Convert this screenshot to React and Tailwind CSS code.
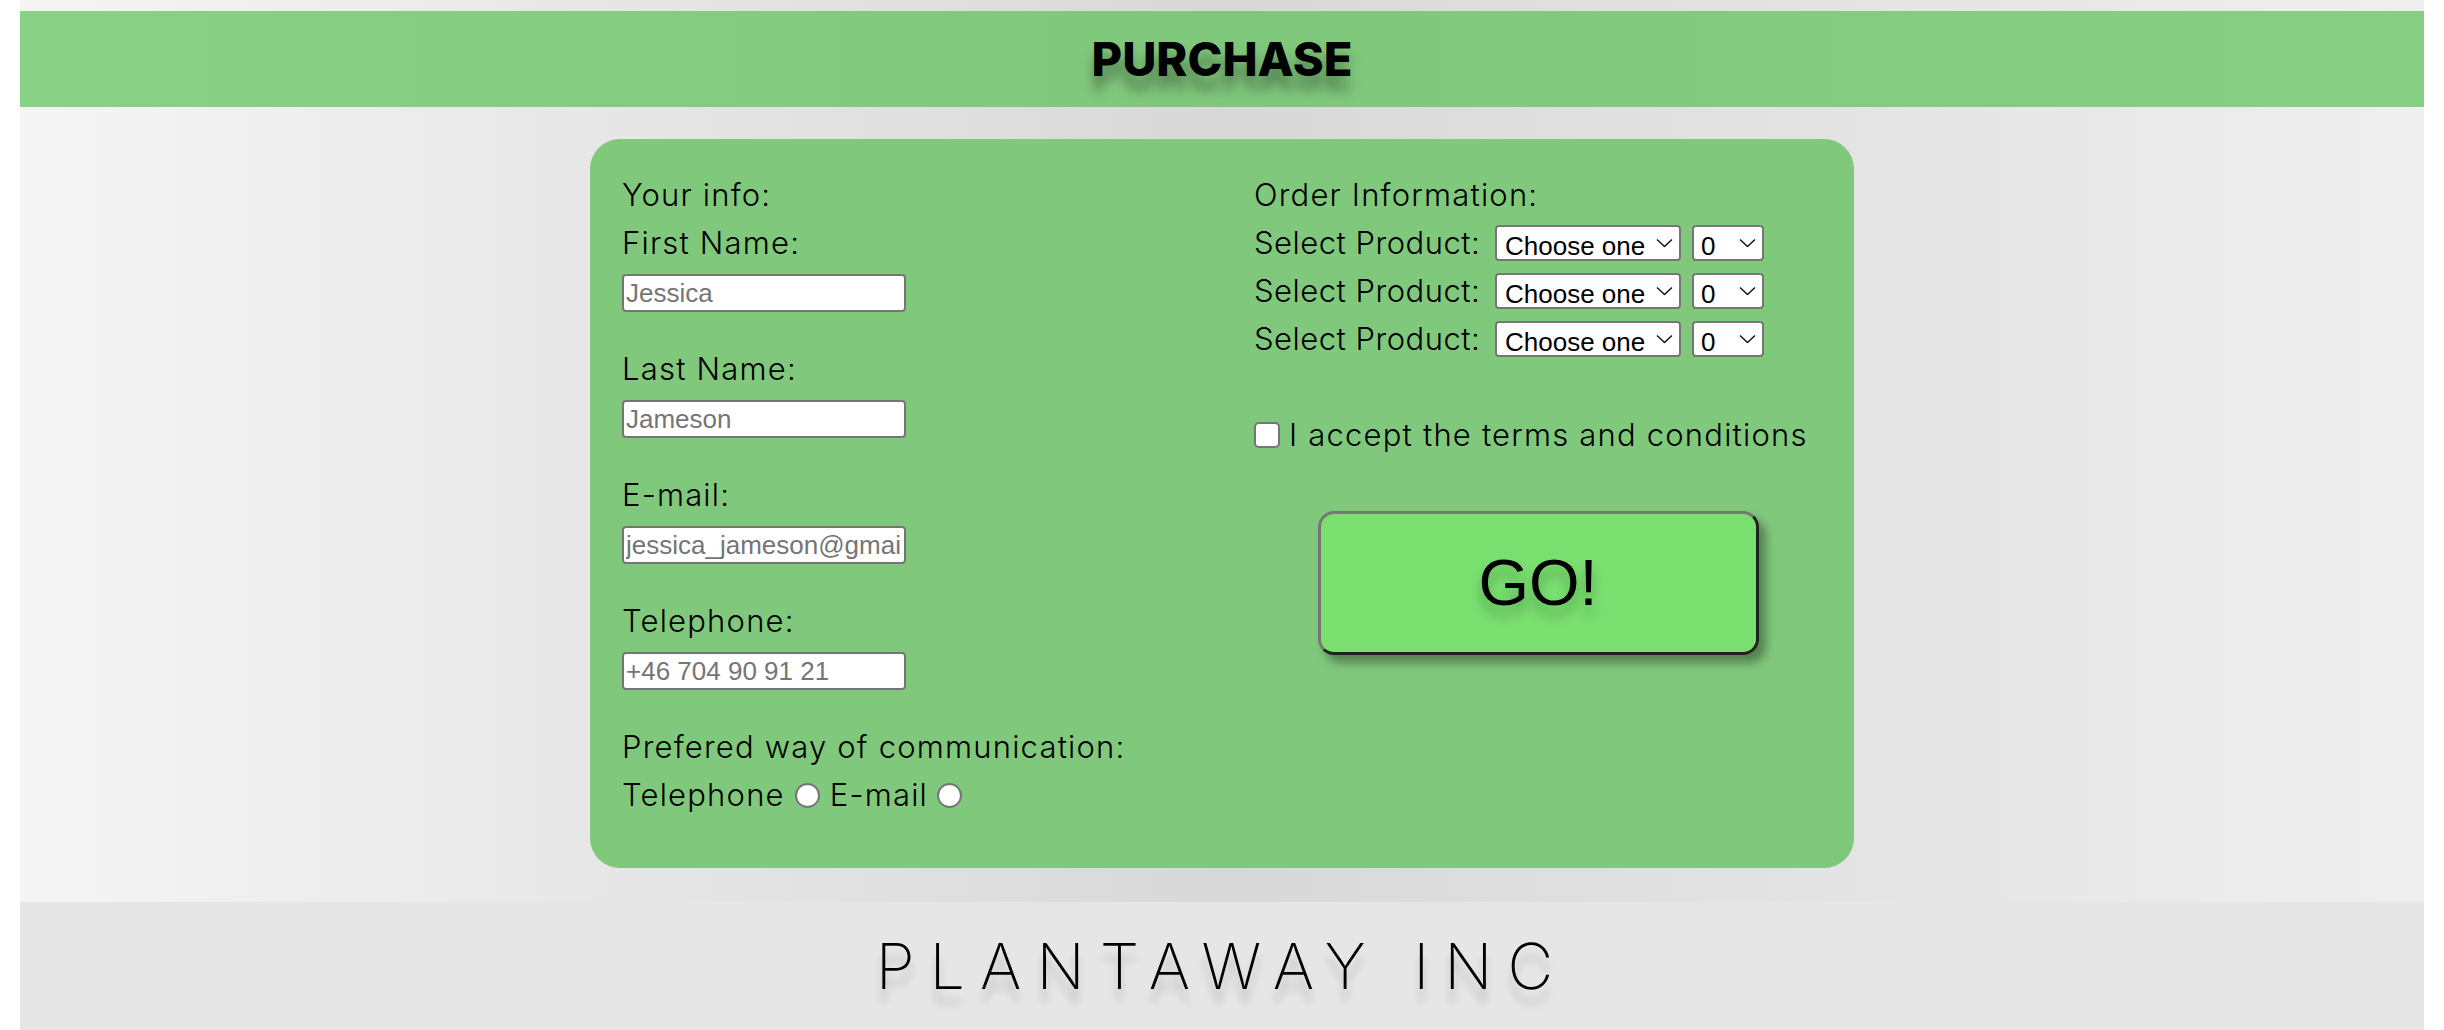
import React, { useState } from "react";

const labelFont = { fontFamily: "Inter, 'Open Sans', sans-serif" };

const Chevron = () => (
  <svg
    width="17"
    height="9"
    viewBox="0 0 17 9"
    className="pointer-events-none absolute right-[8px] top-1/2 -translate-y-1/2"
  >
    <path d="M1 1 L8.5 8 L16 1" fill="none" stroke="#111" strokeWidth="1.4" />
  </svg>
);

const Field = ({ label, placeholder }) => (
  <div>
    <div className="h-[48px] flex items-center">{label}</div>
    <input
      type="text"
      placeholder={placeholder}
      className="mt-[7px] mb-[33px] block w-[284px] h-[38px] bg-white border-2 border-[#767676] rounded-[4px] px-[2px] text-[26px] leading-normal tracking-normal text-black placeholder:text-[#757575] font-['Liberation_Sans',Arial,sans-serif] outline-none"
    />
  </div>
);

const ProductRow = () => (
  <div className="h-[48px] flex items-center">
    <span className="w-[241px] shrink-0 tracking-[0.5px]">Select Product:</span>
    <div className="relative flex">
      <select className="appearance-none w-[186px] h-[36px] bg-white border-2 border-[#767676] rounded-[4px] pl-[8px] py-0 text-[26px] leading-normal tracking-normal text-black font-['Liberation_Sans',Arial,sans-serif] outline-none">
        <option>Choose one</option>
        <option>Monstera</option>
        <option>Ficus</option>
        <option>Cactus</option>
      </select>
      <Chevron />
    </div>
    <div className="relative flex ml-[11px]">
      <select className="appearance-none w-[72px] h-[36px] bg-white border-2 border-[#767676] rounded-[4px] pl-[7px] py-0 text-[26px] leading-normal tracking-normal text-black font-['Liberation_Sans',Arial,sans-serif] outline-none">
        <option>0</option>
        <option>1</option>
        <option>2</option>
        <option>3</option>
      </select>
      <Chevron />
    </div>
  </div>
);

export default function App() {
  const [accepted, setAccepted] = useState(false);
  const [contact, setContact] = useState("");

  return (
    <div className="min-h-screen bg-white">
      <div className="mx-[20px] pt-[11px] bg-[linear-gradient(90deg,#f5f5f5_0%,#d8d8d8_50%,#efefef_100%)]">
        <header className="h-[96px] flex items-center justify-center bg-[linear-gradient(90deg,#89d186_0%,#7fc77b_50%,#87cf84_100%)]">
          <h1
            className="text-[47px] font-extrabold text-black [text-shadow:0_14px_12px_rgba(0,0,0,0.35)]"
            style={{ fontFamily: "Inter, sans-serif" }}
          >
            PURCHASE
          </h1>
        </header>

        <main className="pt-[32px] pb-[34px]">
          <form
            className="w-[1264px] mx-auto bg-[#80c87c] rounded-[30px] pt-[32px] px-[32px] pb-[49px] flex text-[31px] font-light tracking-[1.2px] text-black leading-[48px]"
            style={labelFont}
            onSubmit={(e) => e.preventDefault()}
          >
            <div className="w-[632px] shrink-0">
              <div className="h-[48px] flex items-center">Your info:</div>
              <Field label="First Name:" placeholder="Jessica" />
              <Field label="Last Name:" placeholder="Jameson" />
              <Field label="E-mail:" placeholder="jessica_jameson@gmail.com" />
              <Field label="Telephone:" placeholder="+46 704 90 91 21" />
              <div className="h-[48px] flex items-center">Prefered way of communication:</div>
              <div className="h-[48px] flex items-center">
                <span>Telephone</span>
                <input
                  type="radio"
                  name="contact"
                  checked={contact === "tel"}
                  onChange={() => setContact("tel")}
                  className="appearance-none ml-[10px] mr-[10px] w-[25px] h-[25px] rounded-full bg-white border-2 border-[#767676] checked:border-[7px] checked:border-[#0075ff]"
                />
                <span>E-mail</span>
                <input
                  type="radio"
                  name="contact"
                  checked={contact === "mail"}
                  onChange={() => setContact("mail")}
                  className="appearance-none ml-[9px] w-[25px] h-[25px] rounded-full bg-white border-2 border-[#767676] checked:border-[7px] checked:border-[#0075ff]"
                />
              </div>
            </div>

            <div className="flex-1 flex flex-col">
              <div className="h-[48px] flex items-center">Order Information:</div>
              <ProductRow />
              <ProductRow />
              <ProductRow />
              <div className="h-[48px]" />
              <label className="h-[48px] flex items-center">
                <input
                  type="checkbox"
                  checked={accepted}
                  onChange={(e) => setAccepted(e.target.checked)}
                  className="appearance-none w-[26px] h-[26px] mr-[9px] rounded-[5px] bg-white border-2 border-[#767676] checked:bg-[#0075ff] checked:border-[#0075ff]"
                />
                <span>I accept the terms and conditions</span>
              </label>
              <button
                type="submit"
                className="self-center mt-[52px] w-[441px] h-[144px] bg-[#79df6f] rounded-[16px] border-[3px] border-t-[#777] border-l-[#777] border-b-[#222] border-r-[#222] shadow-[7px_8px_10px_rgba(0,0,0,0.35)] text-[65px] leading-normal tracking-normal text-black [text-shadow:0_10px_12px_rgba(0,0,0,0.25)]"
                style={{ fontFamily: "'Liberation Sans', Arial, sans-serif" }}
              >
                GO!
              </button>
            </div>
          </form>
        </main>
      </div>

      <footer className="mx-[20px] h-[128px] bg-[#e6e6e6] flex items-center justify-center">
        <span
          className="text-[63px] font-extralight tracking-[15px] text-black [text-shadow:0_14px_8px_rgba(0,0,0,0.18)]"
          style={{ fontFamily: "Inter, sans-serif" }}
        >
          PLANTAWAY INC
        </span>
      </footer>
    </div>
  );
}
